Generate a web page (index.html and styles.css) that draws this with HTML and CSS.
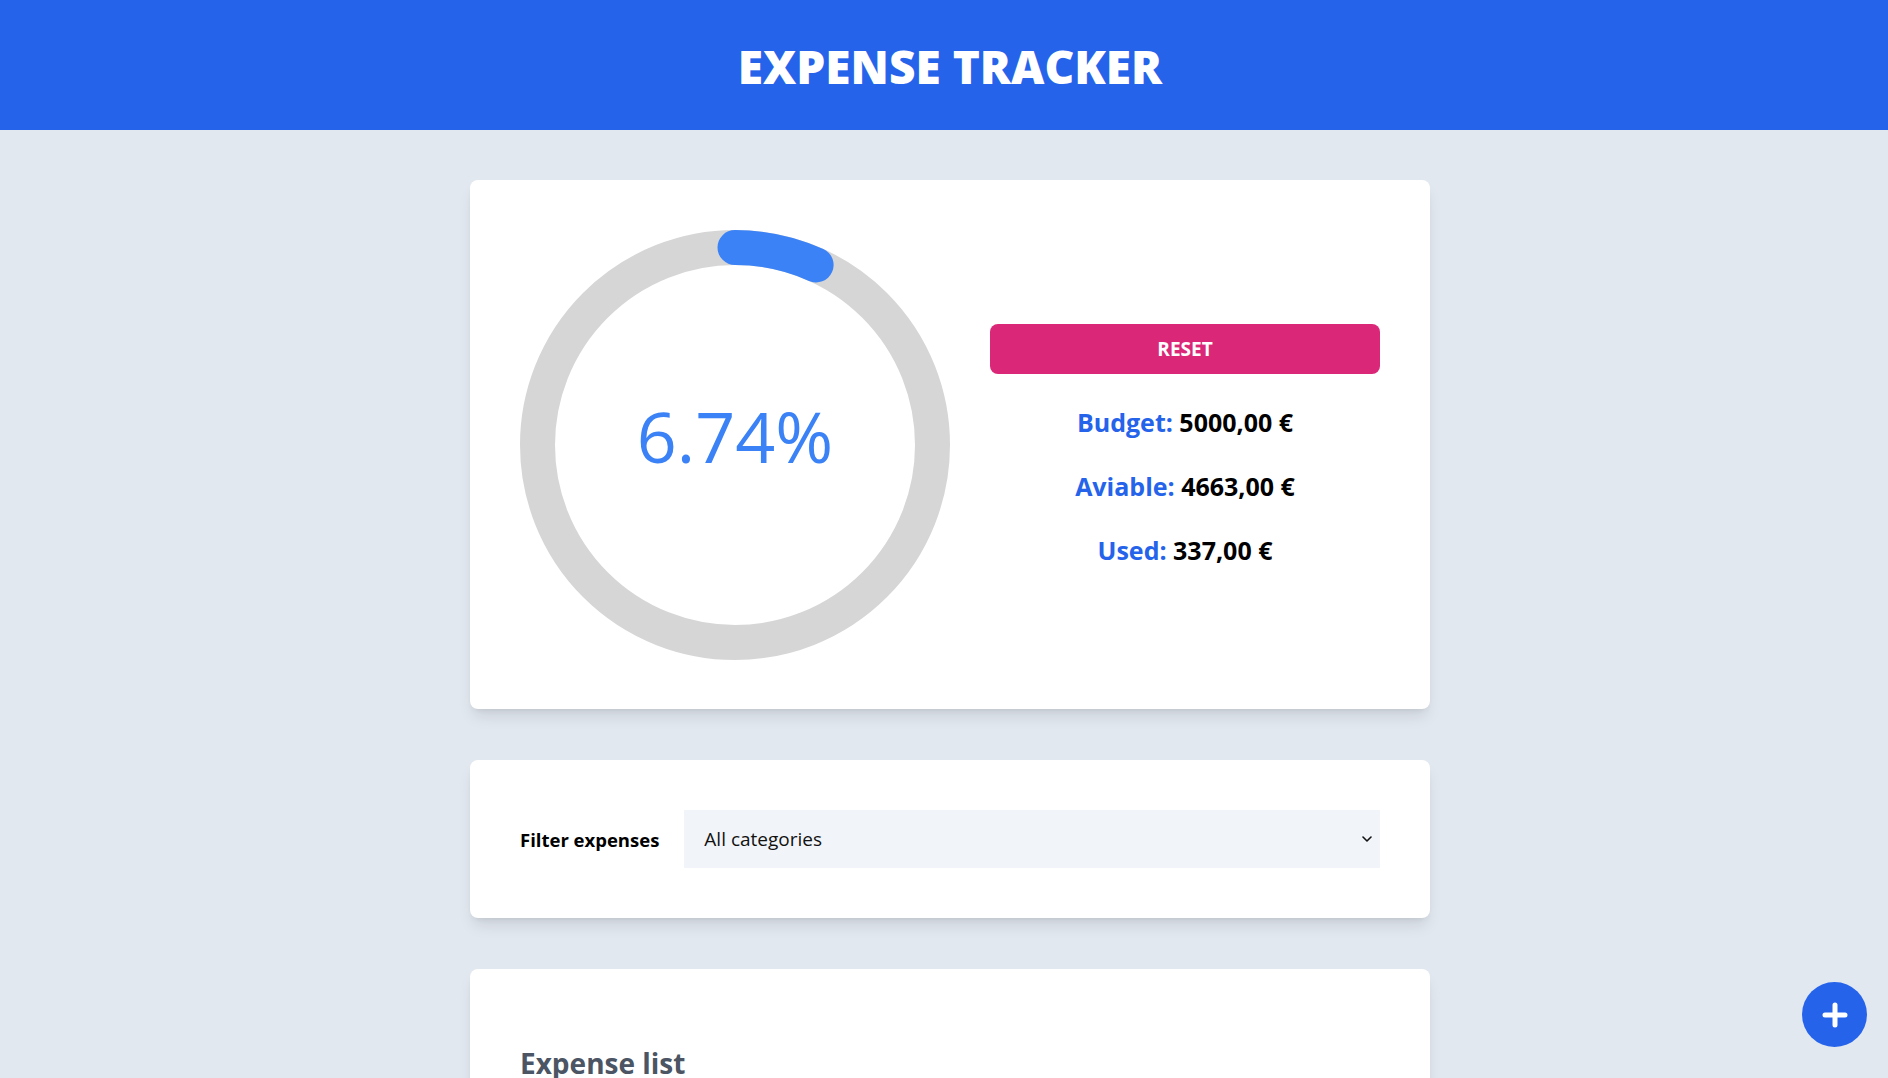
FILE: index.html
```html
<!DOCTYPE html>
<html lang="en">
<head>
<meta charset="utf-8">
<title>Expense Tracker</title>
<link rel="stylesheet" href="styles.css">
</head>
<body>
<header class="topbar">
  <h1 class="title">EXPENSE TRACKER</h1>
</header>
<main class="content">
  <section class="card summary">
    <div class="gauge">
      <svg class="gauge-svg" viewBox="0 0 430 430" width="430" height="430">
        <circle cx="215" cy="215" r="197.5" fill="none" stroke="#d6d6d6" stroke-width="35"/>
        <circle cx="215" cy="215" r="197.5" fill="none" stroke="#3b82f6" stroke-width="35" stroke-linecap="round" stroke-dasharray="83.6 2000" transform="rotate(-90 215 215)"/>
      </svg>
      <div class="gauge-text">6.74%</div>
    </div>
    <div class="totals">
      <button class="reset">RESET</button>
      <p class="line"><span class="lbl">Budget:</span> 5000,00 €</p>
      <p class="line"><span class="lbl">Aviable:</span> 4663,00 €</p>
      <p class="line"><span class="lbl">Used:</span> 337,00 €</p>
    </div>
  </section>
  <section class="card filter">
    <label class="filter-label" for="cat">Filter expenses</label>
    <div class="select-wrap">
      <select id="cat" class="select">
        <option>All categories</option>
      </select>
      <svg class="chev" viewBox="0 0 10 6" width="10" height="6"><path d="M1 1 L5 5 L9 1" fill="none" stroke="#111" stroke-width="1.6" stroke-linecap="round" stroke-linejoin="round"/></svg>
    </div>
  </section>
  <section class="card list">
    <h2 class="list-title">Expense list</h2>
  </section>
</main>
<button class="fab" aria-label="Add expense">
  <svg viewBox="0 0 26 26" width="26" height="26"><path d="M13 3 V23 M3 13 H23" stroke="#fff" stroke-width="5" stroke-linecap="round"/></svg>
</button>
</body>
</html>
```
FILE: styles.css
```css
html, body {
  margin: 0;
  padding: 0;
}
body {
  background: #e2e8f0;
  font-family: "Open Sans", "Noto Sans", sans-serif;
  color: #000;
}
.topbar {
  background: #2563eb;
  height: 130px;
  display: flex;
  align-items: center;
  justify-content: center;
  padding-left: 12px;
  box-sizing: border-box;
}
.title {
  margin: 0;
  color: #fff;
  font-size: 46px;
  font-weight: 800;
  letter-spacing: 0;
  padding-top: 2px;
}
.content {
  padding: 50px 0 0 12px;
  display: flex;
  flex-direction: column;
  align-items: center;
  gap: 51px;
}
.card {
  width: 960px;
  box-sizing: border-box;
  background: #fff;
  border-radius: 8px;
  box-shadow: 0 10px 15px -3px rgba(0,0,0,0.1), 0 4px 6px -4px rgba(0,0,0,0.1);
}
.summary {
  padding: 50px 50px 49px;
  display: flex;
  align-items: center;
  gap: 40px;
}
.gauge {
  position: relative;
  width: 430px;
  height: 430px;
  flex: none;
}
.gauge-svg {
  display: block;
}
.gauge-text {
  position: absolute;
  inset: 0;
  display: flex;
  align-items: center;
  justify-content: center;
  color: #3b82f6;
  font-size: 70px;
  font-weight: 400;
  padding-bottom: 19px;
  box-sizing: border-box;
}
.totals {
  flex: 1;
  display: flex;
  flex-direction: column;
  align-items: stretch;
  text-align: center;
}
.reset {
  height: 50px;
  border: none;
  border-radius: 8px;
  background: #db2777;
  color: #fff;
  font-family: inherit;
  font-size: 19px;
  font-weight: 700;
  cursor: pointer;
}
.line {
  margin: 32px 0 0;
  font-size: 25px;
  line-height: 32px;
  font-weight: 700;
}
.lbl {
  color: #2563eb;
}
.filter {
  padding: 50px;
  display: flex;
  align-items: center;
  gap: 25px;
}
.filter-label {
  font-size: 18.5px;
  font-weight: 700;
}
.select-wrap {
  position: relative;
  flex: 1;
}
.select {
  width: 100%;
  height: 58px;
  border: none;
  background: #f1f5f9;
  appearance: none;
  -webkit-appearance: none;
  padding: 0 20px;
  font-family: inherit;
  font-size: 19px;
  color: #111;
  border-radius: 0;
}
.chev {
  position: absolute;
  right: 8px;
  top: 26px;
  pointer-events: none;
}
.list {
  padding: 50px;
  min-height: 300px;
}
.list-title {
  margin: 25px 0 0;
  font-size: 28px;
  font-weight: 700;
  color: #4b5563;
}
.fab {
  position: fixed;
  right: 21px;
  bottom: 31px;
  width: 65px;
  height: 65px;
  border-radius: 50%;
  border: none;
  background: #2563eb;
  display: flex;
  align-items: center;
  justify-content: center;
  padding: 0;
  cursor: pointer;
}
```
